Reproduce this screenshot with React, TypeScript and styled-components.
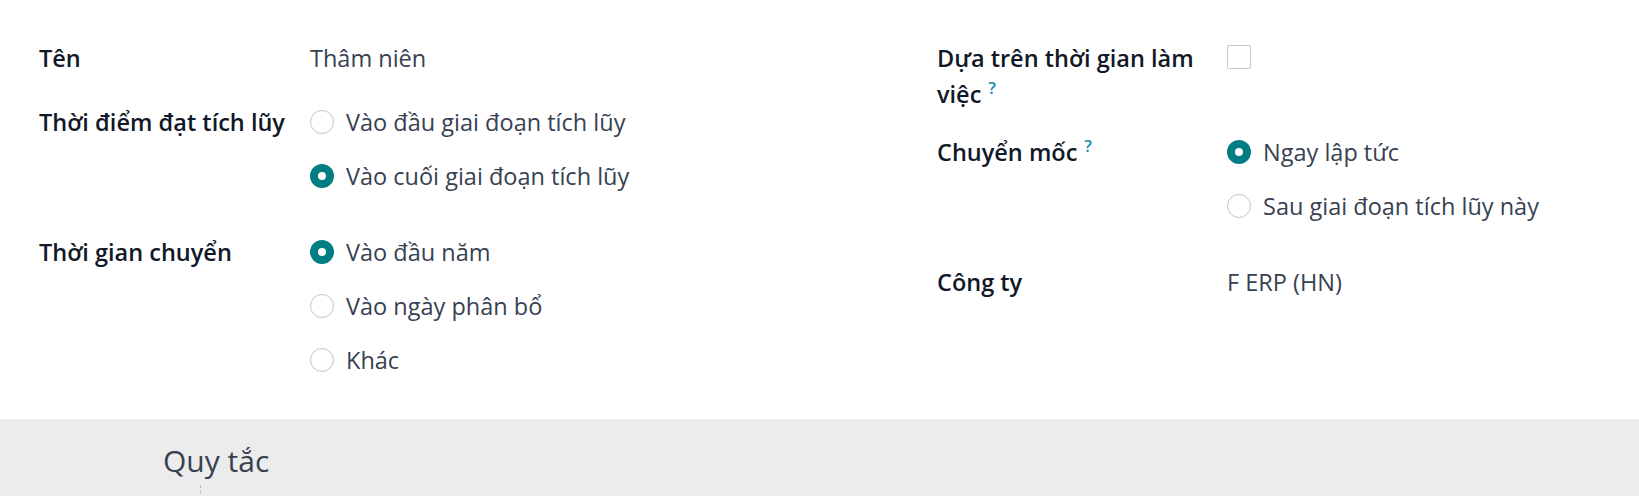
import { FC } from "react";
import { styled, createGlobalStyle, css } from "styled-components";

const GlobalStyle = createGlobalStyle`
  * { box-sizing: border-box; }
  body {
    margin: 0;
    background: #ececec;
    font-family: "Open Sans", "Noto Sans", sans-serif;
    font-size: 23.5px;
    color: #374151;
  }
`;

type Choice = { label: string; checked?: boolean };

type Field =
  | { kind: "text"; label: string; value: string; help?: boolean }
  | { kind: "radio"; label: string; options: Choice[]; help?: boolean }
  | { kind: "check"; label: string; checked: boolean; help?: boolean };

const leftFields: Field[] = [
  { kind: "text", label: "Tên", value: "Thâm niên" },
  {
    kind: "radio",
    label: "Thời điểm đạt tích lũy",
    options: [
      { label: "Vào đầu giai đoạn tích lũy" },
      { label: "Vào cuối giai đoạn tích lũy", checked: true },
    ],
  },
  {
    kind: "radio",
    label: "Thời gian chuyển",
    options: [
      { label: "Vào đầu năm", checked: true },
      { label: "Vào ngày phân bổ" },
      { label: "Khác" },
    ],
  },
];

const rightFields: Field[] = [
  { kind: "check", label: "Dựa trên thời gian làm việc", checked: false, help: true },
  {
    kind: "radio",
    label: "Chuyển mốc",
    help: true,
    options: [
      { label: "Ngay lập tức", checked: true },
      { label: "Sau giai đoạn tích lũy này" },
    ],
  },
  { kind: "text", label: "Công ty", value: "F ERP (HN)" },
];

const FieldGroup: FC<{ fields: Field[]; labelWidth: number; labelMax: number }> = ({
  fields,
  labelWidth,
  labelMax,
}) => (
  <Group $labelWidth={labelWidth}>
    {fields.map((f) => (
      <Row key={f.label}>
        <Label $max={labelMax}>
          {f.label}
          {f.help && <Help>?</Help>}
        </Label>
        <Value>
          {f.kind === "text" && <Text>{f.value}</Text>}
          {f.kind === "check" && <CheckBox $checked={f.checked} />}
          {f.kind === "radio" && (
            <RadioList>
              {f.options.map((o) => (
                <RadioItem key={o.label}>
                  <RadioDot $checked={!!o.checked} />
                  <span>{o.label}</span>
                </RadioItem>
              ))}
            </RadioList>
          )}
        </Value>
      </Row>
    ))}
  </Group>
);

export default function App() {
  return (
    <>
      <GlobalStyle />
      <Sheet>
        <FieldGroup fields={leftFields} labelWidth={271} labelMax={255} />
        <FieldGroup fields={rightFields} labelWidth={290} labelMax={268} />
      </Sheet>
      <Notebook>
        <NotebookTitle>Quy tắc</NotebookTitle>
        <DashedGuide />
      </Notebook>
    </>
  );
}

const Sheet = styled.div`
  background: #fff;
  height: 419px;
  padding: 40px 39px 0;
  display: grid;
  grid-template-columns: 898px 1fr;
  align-items: start;
`;

const Group = styled.div<{ $labelWidth: number }>`
  display: grid;
  grid-template-columns: ${({ $labelWidth }) => $labelWidth}px 1fr;
  row-gap: 22px;
`;

const Row = styled.div`
  display: contents;
`;

const Label = styled.div<{ $max: number }>`
  font-weight: 600;
  color: #111827;
  line-height: 36px;
  min-height: 42px;
  max-width: ${({ $max }) => $max}px;
`;

const Help = styled.span`
  display: inline-block;
  color: #1a8db3;
  font-size: 17px;
  font-weight: 600;
  line-height: 14px;
  margin-left: 7px;
  vertical-align: 9px;
`;

const Value = styled.div`
  min-height: 42px;
`;

const Text = styled.div`
  line-height: 36px;
`;

const CheckBox = styled.div<{ $checked: boolean }>`
  margin-top: 5px;
  width: 24px;
  height: 24px;
  border: 1px solid #c7c7c7;
  border-radius: 2px;
  background: ${({ $checked }) => ($checked ? "#017e84" : "#fff")};
`;

const RadioList = styled.div`
  display: flex;
  flex-direction: column;
`;

const RadioItem = styled.label`
  display: flex;
  align-items: center;
  gap: 12px;
  height: 36px;
  margin-bottom: 18px;
  line-height: 36px;
`;

const RadioDot = styled.span<{ $checked: boolean }>`
  flex: none;
  width: 24px;
  height: 24px;
  border-radius: 50%;
  background: #fff;
  ${({ $checked }) =>
    $checked
      ? css`
          border: 8px solid #017e84;
        `
      : css`
          border: 1px solid #c4c4c4;
        `}
`;

const Notebook = styled.div`
  background: #ececec;
  height: 77px;
  padding: 22px 0 0 163px;
  overflow: hidden;
`;

const NotebookTitle = styled.h2`
  margin: 0;
  font-size: 30px;
  font-weight: 400;
  line-height: 40px;
  color: #374151;
`;

const DashedGuide = styled.div`
  margin: 4px 0 0 37px;
  height: 20px;
  border-left: 1px dashed #b8b8b8;
`;
